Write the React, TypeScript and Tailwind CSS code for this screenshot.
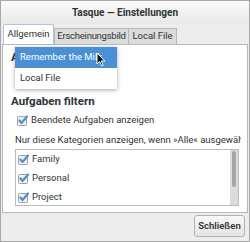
import React from 'react';

const font = { fontFamily: 'Roboto, "Liberation Sans", sans-serif' };

function Check() {
    return (
        <svg width="11" height="11" viewBox="0 0 11 11" className="shrink-0">
            <rect x="0.5" y="1.5" width="9" height="9" rx="1" fill="#f2f2f2" stroke="#a0a0a0" />
            <path d="M2.5 5.5 L4.5 8 L10 1.5" fill="none" stroke="#4a90d9" strokeWidth="2.2" strokeLinecap="round" strokeLinejoin="round" />
        </svg>
    );
}

function CheckRow({ label }: { label: string }) {
    return (
        <div className="flex items-center gap-[3px] h-[19px] text-[9.5px] text-[#2e3436] shrink-0">
            <Check />
            <span>{label}</span>
        </div>
    );
}

function Cursor() {
    return (
        <svg width="10" height="15" viewBox="0 0 10 15" className="absolute left-[95px] top-[51px]">
            <path d="M1 1 L1 12 L3.6 9.6 L5.6 14 L7.2 13.3 L5.3 9 L8.8 9 Z" fill="#111" stroke="#fff" strokeWidth="1" strokeLinejoin="round" />
        </svg>
    );
}

export default function App() {
    return (
        <div style={font} className="relative w-[250px] h-[242px] bg-[#ededed] border border-[#a8a8a8] flex flex-col overflow-hidden">
            <div className="h-[23px] shrink-0 bg-gradient-to-b from-[#fbfbfb] to-[#e8e8e7] flex items-center justify-center text-[10px] font-bold text-[#2e3436]">
                Tasque — Einstellungen
            </div>
            <div className="px-[1px] flex-1 flex flex-col">
                <div className="flex items-end h-[20px] pl-[1px] shrink-0">
                    <div className="h-[20px] w-[51px] bg-white border border-b-0 border-[#a9c6e6] rounded-t-[2px] text-[9.5px] text-[#2e3436] flex items-center justify-center">Allgemein</div>
                    <div className="h-[16px] w-[75px] bg-[#dcdcdb] border border-b-0 border-[#b8b8b8] text-[9.5px] tracking-[-0.25px] text-[#2e3436] flex items-center justify-center whitespace-nowrap">Erscheinungsbild</div>
                    <div className="h-[16px] w-[48px] bg-[#dcdcdb] border border-b-0 border-l-0 border-[#b8b8b8] text-[9.5px] text-[#2e3436] flex items-center justify-center">Local File</div>
                </div>
                <div className="relative h-[169px] shrink-0 bg-white border border-[#b8b8b8] overflow-hidden flex flex-col">
                    <div className="h-[48px] shrink-0">
                        <div className="h-[26px] pl-[8px] flex items-center text-[11.5px] font-bold text-[#2e3436]">Anbieter</div>
                    </div>
                    <div className="absolute left-[12px] top-[2px] w-[102px] bg-white shadow-[0_1px_4px_rgba(0,0,0,0.35)] text-[9.5px] text-[#2e3436]">
                        <div className="h-[21px] bg-[#4a90d9] text-white flex items-center pl-[5px]">Remember the Milk</div>
                        <div className="h-[21px] flex items-center pl-[5px]">Local File</div>
                    </div>
                    <div className="h-[18px] shrink-0 pl-[8px] flex items-center text-[11.5px] font-bold text-[#2e3436]">Aufgaben filtern</div>
                    <div className="pl-[14px]">
                        <CheckRow label="Beendete Aufgaben anzeigen" />
                    </div>
                    <div className="ml-[12px] mt-[2px] h-[16px] shrink-0 flex items-center text-[9.5px] text-[#2e3436] whitespace-nowrap w-[226px] overflow-hidden">
                        Nur diese Kategorien anzeigen, wenn »Alle« ausgewählt ist
                    </div>
                    <div className="ml-[12px] mt-[1px] w-[224px] h-[57px] shrink-0 border border-[#bcbcbc] flex overflow-hidden">
                        <div className="flex-1 pl-[2px] flex flex-col">
                            <CheckRow label="Family" />
                            <CheckRow label="Personal" />
                            <CheckRow label="Project" />
                        </div>
                        <div className="w-[8px] bg-[#dcdcdc] flex justify-center pt-[1px]">
                            <div className="w-[4px] h-[36px] rounded-full bg-[#a6a6a6]" />
                        </div>
                    </div>
                </div>
                <div className="flex justify-end pr-[3px] pt-[2px]">
                    <button className="h-[22px] w-[51px] rounded-[3px] border border-[#b3b3b3] bg-gradient-to-b from-[#f8f8f8] to-[#e4e4e4] text-[9.5px] font-semibold text-[#2e3436]">
                        Schließen
                    </button>
                </div>
            </div>
            <Cursor />
        </div>
    );
}
